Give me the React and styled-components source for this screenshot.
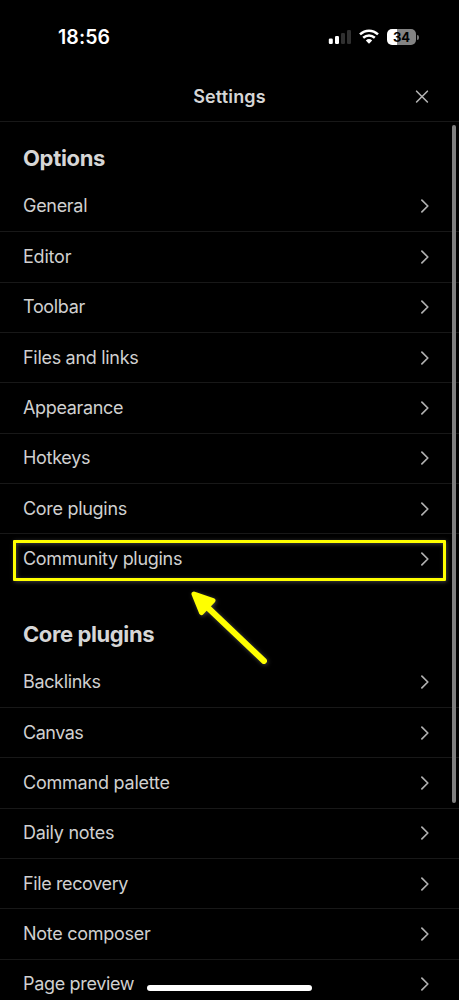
import React from "react";
import styled, { createGlobalStyle } from "styled-components";

const GlobalStyle = createGlobalStyle`
  * { box-sizing: border-box; }
  html, body { margin: 0; background: #000; overflow: hidden; }
`;

const Screen = styled.div`
  position: relative;
  width: 459px;
  height: 1000px;
  overflow: hidden;
  background: #000;
  color: #d6d6d6;
  font-family: Inter, "Liberation Sans", sans-serif;
`;

const StatusBar = styled.header`
  display: flex;
  align-items: center;
  justify-content: space-between;
  height: 74px;
  padding: 0 40px 0 58px;
`;

const Clock = styled.time`
  padding-top: 1px;
  color: #fff;
  font-size: 19.5px;
  font-weight: 600;
  line-height: 25px;
  letter-spacing: 0.1px;
`;

const StatusIcons = styled.div`
  display: flex;
  align-items: center;
  gap: 8px;
  svg { display: block; }
`;

const Battery = styled.div`
  display: flex;
  align-items: center;
  gap: 1px;
`;

const BatteryBody = styled.div`
  width: 29px;
  height: 16px;
  border-radius: 5px;
  background: linear-gradient(90deg, #fff 34%, #838383 34%);
  color: #000;
  font-size: 13px;
  font-weight: 700;
  line-height: 16px;
  text-align: center;
`;

const BatteryCap = styled.span`
  width: 2px;
  height: 5px;
  border-radius: 0 2px 2px 0;
  background: #777;
`;

const TitleBar = styled.div`
  display: grid;
  grid-template-columns: 1fr auto 1fr;
  align-items: center;
  height: 48px;
  padding: 0 30px 2px;
  border-bottom: 1px solid #181818;
`;

const Title = styled.h1`
  grid-column: 2;
  margin: 0;
  font-size: 18px;
  font-weight: 600;
  line-height: 24px;
  letter-spacing: 0.15px;
`;

const CloseButton = styled.button`
  justify-self: end;
  display: flex;
  padding: 0;
  border: 0;
  background: none;
  color: #b3b3b3;
`;

const Section = styled.section`
  padding-top: ${({ $gap }) => $gap}px;
`;

const SectionTitle = styled.h2`
  margin: 0;
  padding: 0 23px;
  height: 37.8px;
  font-size: 22px;
  font-weight: 700;
  line-height: 28px;
  letter-spacing: ${({ $tracking }) => $tracking}px;
`;

const Row = styled.div`
  display: flex;
  align-items: center;
  justify-content: space-between;
  height: 50.36px;
  padding: 0 30px 0 23px;
  border-bottom: 1px solid ${({ $last }) => ($last ? "transparent" : "#181818")};
  color: #d0d0d0;
  font-size: 18px;
  line-height: 24px;
  letter-spacing: ${({ $tracking }) => $tracking}px;
  svg { display: block; color: #b0b0b0; }
`;

const Scrollbar = styled.div`
  position: absolute;
  top: 125px;
  right: 3px;
  width: 4px;
  height: 678px;
  border-radius: 2px;
  background: #808080;
`;

const Highlight = styled.div`
  position: absolute;
  left: 13px;
  top: 540px;
  width: 433px;
  height: 41px;
  border: 3px solid #ff0;
  border-radius: 1px;
  box-shadow: 1px 1px 4px #404040, inset 1px 1px 4px #404040;
`;

const Arrow = styled.svg`
  position: absolute;
  left: 180px;
  top: 580px;
  filter: drop-shadow(1px 1px 2px #444);
`;

const HomeIndicator = styled.div`
  position: absolute;
  left: 147px;
  top: 985px;
  width: 165px;
  height: 6px;
  border-radius: 3px;
  background: #fff;
`;

const Signal = () => (
  <svg width="23" height="16" viewBox="0 0 23 16">
    <rect x="0.8" y="9.5" width="4" height="5.5" rx="1.2" fill="#fff" />
    <rect x="7" y="7" width="4" height="8" rx="1.2" fill="#fff" />
    <rect x="13" y="4" width="4" height="11" rx="1.2" fill="#303030" />
    <rect x="19" y="1" width="4" height="14" rx="1.2" fill="#303030" />
  </svg>
);

const Wifi = () => (
  <svg width="20" height="16" viewBox="0 0 20 16" fill="none" stroke="#fff" strokeWidth="2.5">
    <path d="M1 5.4Q5 1.7 10 1.7T19 5.4" />
    <path d="M4.2 8.8Q6.8 6.5 10 6.5T15.8 8.8" />
    <path d="M6.8 11.4Q10 8.7 13.2 11.4L10 14.8Z" fill="#fff" stroke="none" />
  </svg>
);

const Chevron = () => (
  <svg width="8" height="14" viewBox="0 0 8 14" fill="none" stroke="currentColor" strokeWidth="1.7" strokeLinecap="round" strokeLinejoin="round">
    <path d="M0.9 1.1L6.8 7L0.9 12.9" />
  </svg>
);

const options = [
  ["General", -0.3], ["Editor", -0.2], ["Toolbar", -0.33], ["Files and links", -0.3],
  ["Appearance", -0.35], ["Hotkeys", -0.3], ["Core plugins", -0.3], ["Community plugins", -0.29],
];

const corePlugins = [
  ["Backlinks", -0.35], ["Canvas", -0.5], ["Command palette", -0.22], ["Daily notes", -0.28],
  ["File recovery", -0.38], ["Note composer", -0.28], ["Page preview", -0.33],
];

const SettingsGroup = ({ title, items, gap, tracking }) => (
  <Section $gap={gap}>
    <SectionTitle $tracking={tracking}>{title}</SectionTitle>
    {items.map(([label, spacing], i) => (
      <Row key={label} $tracking={spacing} $last={i === items.length - 1}>
        <span>{label}</span>
        <Chevron />
      </Row>
    ))}
  </Section>
);

export default function App() {
  return (
    <Screen>
      <GlobalStyle />
      <StatusBar>
        <Clock>18:56</Clock>
        <StatusIcons>
          <Signal />
          <Wifi />
          <Battery>
            <BatteryBody>34</BatteryBody>
            <BatteryCap />
          </Battery>
        </StatusIcons>
      </StatusBar>
      <TitleBar>
        <Title>Settings</Title>
        <CloseButton aria-label="Close">
          <svg width="14" height="14" viewBox="0 0 14 14" fill="none" stroke="currentColor" strokeWidth="1.6" strokeLinecap="round">
            <path d="M1.6 1.2L12.4 12M12.4 1.2L1.6 12" />
          </svg>
        </CloseButton>
      </TitleBar>
      <SettingsGroup title="Options" items={options} gap={22} tracking={-0.33} />
      <SettingsGroup title="Core plugins" items={corePlugins} gap={35.2} tracking={-0.4} />
      <Scrollbar />
      <Highlight />
      <Arrow width="100" height="100" viewBox="0 0 100 100" fill="#ff0" stroke="#ff0" strokeLinecap="round" strokeLinejoin="round">
        <path d="M24 24L84 81" strokeWidth="6" />
        <path d="M14 14L33 20.5L21.5 32.5Z" strokeWidth="5" />
      </Arrow>
      <HomeIndicator />
    </Screen>
  );
}
